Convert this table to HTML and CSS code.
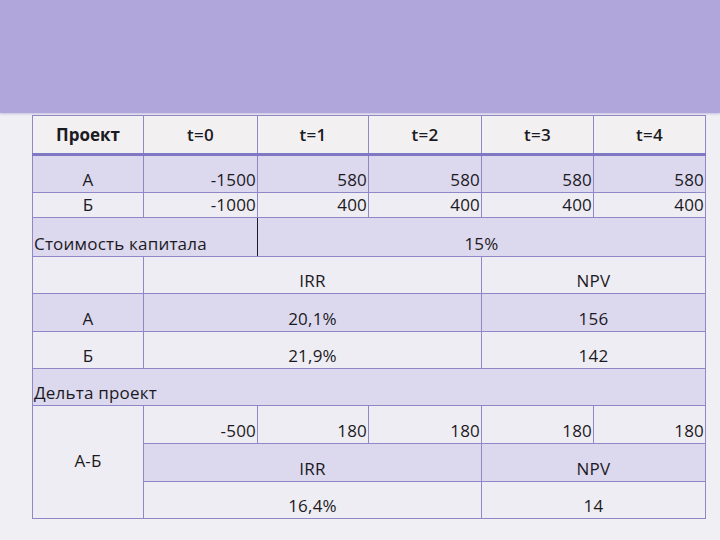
FILE: index.html
```html
<!DOCTYPE html>
<html lang="ru">
<head>
<meta charset="utf-8">
<link rel="stylesheet" href="styles.css">
</head>
<body>
<div class="band"></div>
<main class="sheet">
<table class="grid">
<colgroup><col class="w1"><col class="w2"><col class="w3"><col class="w4"><col class="w5"><col class="w6"></colgroup>
<tr class="hdr"><th class="proj">Проект</th><th>t=0</th><th>t=1</th><th>t=2</th><th>t=3</th><th>t=4</th></tr>
<tr class="lav h38"><td class="c">А</td><td class="r">-1500</td><td class="r">580</td><td class="r">580</td><td class="r">580</td><td class="r">580</td></tr>
<tr class="lite h25"><td class="c">Б</td><td class="r">-1000</td><td class="r">400</td><td class="r">400</td><td class="r">400</td><td class="r">400</td></tr>
<tr class="lav h39"><td class="l cap" colspan="2">Стоимость капитала</td><td class="c" colspan="4">15%</td></tr>
<tr class="lite h37"><td></td><td class="c" colspan="3">IRR</td><td class="c" colspan="2">NPV</td></tr>
<tr class="lav h38"><td class="c">А</td><td class="c" colspan="3">20,1%</td><td class="c" colspan="2">156</td></tr>
<tr class="lite h37"><td class="c">Б</td><td class="c" colspan="3">21,9%</td><td class="c" colspan="2">142</td></tr>
<tr class="lav h37"><td class="l" colspan="6">Дельта проект</td></tr>
<tr class="lite h38"><td class="c mid" rowspan="3">А-Б</td><td class="r">-500</td><td class="r">180</td><td class="r">180</td><td class="r">180</td><td class="r">180</td></tr>
<tr class="lav h38"><td class="c" colspan="3">IRR</td><td class="c" colspan="2">NPV</td></tr>
<tr class="lite h37"><td class="c" colspan="3">16,4%</td><td class="c" colspan="2">14</td></tr>
</table>
</main>
</body>
</html>
```

FILE: styles.css
```css
html, body {
  margin: 0;
  padding: 0;
}
body {
  width: 720px;
  height: 540px;
  overflow: hidden;
  background: #f0eff4;
  font-family: "Open Sans", "Noto Sans", sans-serif;
  color: #1b1a22;
}
.band {
  height: 113px;
  background: #b1a6dc;
  box-shadow: 0 1px 2px rgba(120, 105, 180, 0.35);
}
.sheet {
  padding: 2px 0 0 32px;
}
.grid {
  border-collapse: collapse;
  table-layout: fixed;
  width: 674px;
  font-size: 17px;
  line-height: 20px;
  letter-spacing: 0.2px;
}
.w1 { width: 111px; }
.w2 { width: 114px; }
.w3 { width: 111px; }
.w4 { width: 113px; }
.w5 { width: 112px; }
.w6 { width: 112px; }
.grid th, .grid td {
  border: 1px solid #8f88c6;
  padding: 0 1px 2px 1px;
  vertical-align: bottom;
  white-space: nowrap;
  overflow: visible;
}
.hdr th {
  height: 37px;
  background: #f2f0f1;
  font-weight: 600;
  vertical-align: middle;
  padding: 0;
  border-bottom: 3px solid #8078c4;
}
.hdr th.proj {
  font-weight: 700;
  letter-spacing: 0;
}
.lav td { background: #dcd8ee; }
.lite td { background: #efedf4; }
.h25 { height: 25px; }
.h37 { height: 37px; }
.h38 { height: 38px; }
.h39 { height: 39px; }
.c { text-align: center; }
.r { text-align: right; }
.l { text-align: left; padding-left: 0; }
.cap {
  border-right: 1px solid #1e1c2a !important;
}
.mid {
  vertical-align: middle !important;
}
```
